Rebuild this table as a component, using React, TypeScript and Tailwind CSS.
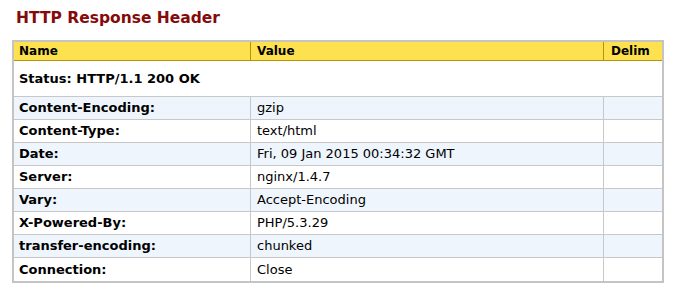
import React from 'react'

const rows: [string, string][] = [
  ['Content-Encoding:', 'gzip'],
  ['Content-Type:', 'text/html'],
  ['Date:', 'Fri, 09 Jan 2015 00:34:32 GMT'],
  ['Server:', 'nginx/1.4.7'],
  ['Vary:', 'Accept-Encoding'],
  ['X-Powered-By:', 'PHP/5.3.29'],
  ['transfer-encoding:', 'chunked'],
  ['Connection:', 'Close'],
]

export default function App() {
  return (
    <div className="min-h-[295px] w-[676px] bg-white pl-[12px] font-['DejaVu_Sans',Verdana,sans-serif] text-black">
      {/* Title */}
      <h1 className="pl-[4px] pt-[8px] text-[15.5px] leading-[20px] font-bold text-[#850a0a]">
        HTTP Response Header
      </h1>

      <table className="mt-[12px] w-[652px] table-fixed border-separate border-spacing-0 border-2 border-[#c4c4c4]">
        <colgroup>
          <col className="w-[237px]" />
          <col className="w-[353px]" />
          <col className="w-[58px]" />
        </colgroup>
        <thead>
          <tr className="h-[19px] bg-[#fde14f] text-left text-[12px] leading-[14px] font-bold">
            <th className="border-r border-b border-[#b8920c] pl-[5px]">Name</th>
            <th className="border-r border-b border-[#b8920c] pl-[6px]">Value</th>
            <th className="border-b border-[#b8920c] pl-[7px]">Delim</th>
          </tr>
        </thead>
        <tbody className="text-[13px] leading-[16px]">
          <tr className="h-[36px]">
            <td colSpan={3} className="border-b border-[#c8c8c8] pl-[5px] font-bold">
              Status: HTTP/1.1 200 OK
            </td>
          </tr>
          {rows.map(([name, value], i) => {
            const last = i === rows.length - 1
            const line = last ? '' : 'border-b'
            return (
              <tr key={name} className={i % 2 === 0 ? 'h-[23px] bg-[#eef5fd]' : 'h-[23px] bg-white'}>
                <td className={`${line} border-r border-[#c8c8c8] pl-[5px] font-bold`}>{name}</td>
                <td className={`${line} border-r border-[#c8c8c8] pl-[6px]`}>{value}</td>
                <td className={`${line} border-[#c8c8c8]`}></td>
              </tr>
            )
          })}
        </tbody>
      </table>
    </div>
  )
}
